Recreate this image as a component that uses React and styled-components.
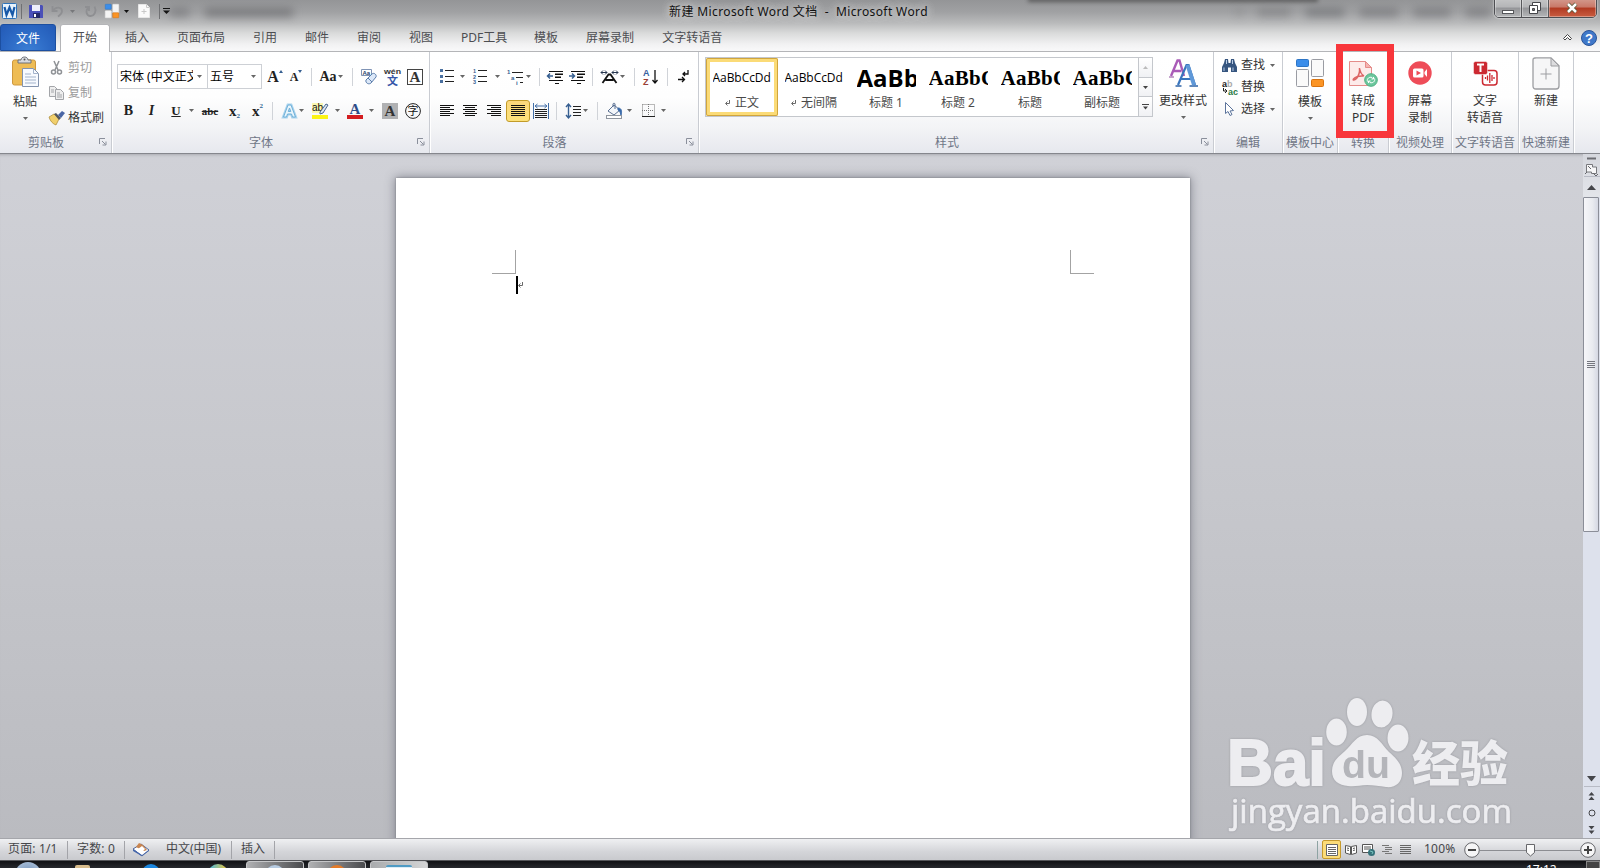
import React from 'react';
import styled, { createGlobalStyle, css } from 'styled-components';

const Global = createGlobalStyle`
  * { box-sizing: border-box; }
  html, body { margin: 0; padding: 0; overflow: hidden; }
  body { font: 12px/16px "Noto Sans", "Noto Sans CJK SC", sans-serif; color: #333; }
  svg { display: block; flex: none; overflow: visible; }
`;

/* ---------- frame ---------- */
const Window = styled.div`
  width: 1600px; height: 868px; display: flex; flex-direction: column; overflow: hidden;
`;
const Header = styled.header`
  height: 52px; flex: none; position: relative; border-bottom: 1px solid #b4b5b8;
  background: linear-gradient(#949597 0, #a0a1a3 12px, #b9babb 23px, #d9dada 33px, #f1f1f2 44px, #f9f9fa 51px);
`;
const TitleBar = styled.div`height: 24px; display: flex; align-items: flex-start; position: relative;`;
const QuickAccess = styled.div`display: flex; align-items: center; height: 22px; width: 300px;`;
const Title = styled.h1`
  margin: 0 0 0 369px; width: 270px; font-size: 12px; font-weight: 400; line-height: 23px; color: #111; white-space: pre;
  letter-spacing: ${p => p.$track}px; text-shadow: 0 0 8px #ddd, 0 0 8px #ddd;
`;
const Ghost = styled.div`
  position: absolute; left: ${p => p.$x}px; top: 8px; display: flex; gap: ${p => p.$gap}px; filter: blur(4px);
`;
const GhostWord = styled.span`width: ${p => p.$w}px; height: 9px; background: #55565a; opacity: ${p => p.$o || 0.5};`;
const GlassShade = styled.div`
  position: absolute; left: 1028px; top: -3px; width: 290px; height: 5px; background: #444; opacity: .7; filter: blur(2px);
`;
const Controls = styled.div`
  position: absolute; left: 1494px; top: -2px; display: flex; height: 20px; width: 103px;
  border: 1px solid #4d4e52; border-radius: 0 0 5px 5px; overflow: hidden; box-shadow: 0 0 2px #fff;
`;
const Control = styled.div`
  width: ${p => p.$w}px; display: flex; align-items: center; justify-content: center; border-right: ${p => (p.$close ? 0 : 1)}px solid #57585b;
  background: ${p => p.$close ? 'linear-gradient(#d39a8d, #c97868 45%, #b13a22 50%, #c95d41 100%)' : 'linear-gradient(#c4c5c6, #b4b5b7 45%, #939497 50%, #b5b6b8)'};
  box-shadow: inset 0 0 0 1px rgba(255,255,255,.35);
`;
const TabBar = styled.nav`height: 28px; display: flex; align-items: stretch;`;
const FileTab = styled.div`
  width: 56px; height: 27px; margin-right: 4px; border-radius: 3px 3px 0 0; border: 1px solid #1c4fa0; color: #fff;
  background: radial-gradient(ellipse at 50% 110%, #3c80d6 0, #2a66c2 65%, #235ab6 100%);
  text-align: center; line-height: 27px;
`;
const Tab = styled.div`
  padding: 0 14px; line-height: 28px; color: #4c4d51; white-space: nowrap; height: 28px;
  ${p => p.$w && css`width: ${p.$w}px;`}
  ${p => p.$active && css`
    background: #fff; border: 1px solid #b4b5b8; border-bottom: 0; border-radius: 3px 3px 0 0; padding: 0 12px; margin-right: 1px; line-height: 26px; position: relative; z-index: 1;
  `}
`;
const HeaderTools = styled.div`margin-left: auto; display: flex; align-items: center; gap: 9px; padding-right: 3px; height: 27px;`;

/* ---------- ribbon ---------- */
const Ribbon = styled.div`
  height: 102px; flex: none; display: flex; border-bottom: 1px solid #85878d;
  background: linear-gradient(#fff 0, #fefefe 45px, #f3f4f6 75px, #e6e8ee 101px);
`;
const Group = styled.section`
  width: ${p => p.$w}px; flex: none; position: relative; display: flex; flex-direction: column;
  border-right: 1px solid #c9ccd2; box-shadow: 1px 0 0 #fff;
`;
const Body = styled.div`height: 82px; display: flex; flex-direction: ${p => p.$col ? 'column' : 'row'};`;
const Caption = styled.div`
  height: 18px; line-height: 18px; text-align: center; color: #6f7686; white-space: nowrap; padding-right: ${p => p.$pad || 0}px;
`;
const Launcher = styled.div`position: absolute; right: 4px; bottom: 7px;`;
const Row = styled.div`display: flex; align-items: center; height: 25px; padding-left: ${p => p.$l || 0}px; margin-top: ${p => p.$t || 0}px;`;
const Slot = styled.div`
  width: ${p => p.$w}px; margin-left: ${p => p.$g || 0}px; flex: none; display: flex; align-items: center; justify-content: center;
`;
const Sep = styled.div`width: 1px; height: ${p => p.$h || 18}px; margin-left: ${p => p.$g}px; background: ${p => p.$c || '#d0d3d8'}; flex: none;`;
const Glyph = styled.span`
  font: ${p => p.$italic ? 'italic ' : ''}bold ${p => p.$s}px/20px "Liberation Serif", serif; color: ${p => p.$c || '#222'};
  text-decoration: ${p => p.$d || 'none'};
`;
const Script = styled.span`
  font: bold 7px/8px "Liberation Serif", serif; color: #2e6692; margin-${p => (p.$up ? 'bottom' : 'top')}: 10px;
`;
const Combo = styled.div`
  width: ${p => p.$w}px; height: 25px; border: 1px solid #cdd0d5; margin-left: ${p => p.$m || 0}px; background: #fff; color: #000;
  display: flex; align-items: center; justify-content: space-between; padding: 0 5px 0 2px; white-space: nowrap;
`;
const ComboText = styled.span`width: ${p => p.$w}px; overflow: hidden; line-height: 22px;`;
const Lit = styled.div`
  width: 24px; height: 22px; margin-left: 5px; display: flex; align-items: center; justify-content: center; flex: none;
  border: 1px solid #c29b29; border-radius: 3px; background: linear-gradient(#fbd77c, #fce27a);
`;
const Side = styled.div`display: flex; flex-direction: column; padding-top: 4px;`;
const SideRow = styled.div`
  display: flex; align-items: center; height: ${p => p.$h}px; white-space: nowrap; color: ${p => p.$off ? '#9b9b9b' : '#333'};
`;
const Big = styled.div`
  width: ${p => p.$w}px; margin-left: ${p => p.$l || 0}px; display: flex; flex-direction: column; align-items: center; white-space: nowrap;
`;
const BigIcon = styled.div`height: ${p => p.$h || 40}px; padding-top: ${p => p.$t}px;`;
const BigText = styled.div`line-height: 17px;`;
const Gallery = styled.div`
  width: 448px; height: 60px; margin: 5px 0 0 6px; border: 1px solid #c4c7cc; display: flex; background: #fff; flex: none;
`;
const StyleItem = styled.div`
  width: 72px; height: 58px; display: flex; flex-direction: column; align-items: center; flex: none;
  ${p => p.$on && css`box-shadow: inset 0 0 0 1px #d0a53c, inset 0 0 0 4px #fbdb77; border-radius: 2px; background: #fff;`}
`;
const Sample = styled.div`
  width: 59px; height: 35px; overflow: hidden; white-space: nowrap; color: #000; line-height: 40px;
  font-family: ${p => p.$serif ? '"Liberation Serif", serif' : '"Open Sans", sans-serif'};
  font-size: ${p => p.$s}px; font-weight: ${p => p.$b ? 700 : 400}; letter-spacing: ${p => p.$k || 0}px;
`;
const StyleName = styled.div`display: flex; align-items: center; gap: 5px; line-height: 20px; color: #4a4a4a; white-space: nowrap;`;
const Scroller = styled.div`width: 14px; margin-left: auto; display: flex; flex-direction: column; border-left: 1px solid #c4c7cc;`;
const ScrollBtn = styled.div`
  flex: 1; display: flex; align-items: center; justify-content: center; background: linear-gradient(#fff, #f0f1f4);
  & + & { border-top: 1px solid #c4c7cc; }
`;
const RedFrame = styled.div`position: absolute; left: -2px; top: -8px; width: 58px; height: 94px; border: 7px solid #f8363b; z-index: 3;`;

/* ---------- workspace ---------- */
const Workspace = styled.main`
  height: 684px; flex: none; display: flex; position: relative; background: linear-gradient(#d0d1d7, #c6c7cc 50%, #babbc0);
  box-shadow: inset 0 3px 3px -2px #aaabb1;
`;
const Canvas = styled.div`flex: 1; padding: 24px 0 0 396px; overflow: hidden;`;
const Page = styled.article`
  width: 794px; height: 670px; background: #fff; box-shadow: 0 0 2px #77797f, 0 0 10px 1px #8b8d96; padding: 72px 96px 0;
`;
const Corners = styled.div`display: flex; justify-content: space-between;`;
const Corner = styled.div`width: 24px; height: 24px; border-bottom: 1px solid #a3a3a3; border-${p => p.$side}: 1px solid #a3a3a3;`;
const Line = styled.p`margin: 2px 0 0 24px; display: flex; align-items: center; height: 18px;`;
const Caret = styled.span`width: 2px; height: 18px; background: #000;`;
const ScrollColumn = styled.aside`width: 17px; display: flex; flex-direction: column; background: #dde1ec;`;
const ScrollTop = styled.div`
  width: 17px; height: 43px; background: linear-gradient(#d5d7dd, #e3e5ea); display: flex; flex-direction: column; align-items: center;
`;
const Thumb = styled.div`
  width: 16px; height: 335px; border: 1px solid #8b8e98; border-radius: 1px; background: linear-gradient(90deg, #f6f6f9, #e9ebf0 60%, #d5d8e3);
  display: flex; align-items: center; justify-content: center;
`;
const Spacer = styled.div`flex: 1;`;
const ScrollBottom = styled.div`
  width: 17px; height: 62px; display: flex; flex-direction: column; align-items: center; gap: ${p => p.$gap}px;
`;
const StepStack = styled.div`display: flex; flex-direction: column; align-items: center; gap: 9px;`;
const Rule = styled.div`width: 16px; height: 1px; background: #b8bbc5;`;
const Watermark = styled.div`position: absolute; left: 1220px; top: 536px;`;

/* ---------- bottom ---------- */
const StatusBar = styled.footer`
  height: 22px; flex: none; display: flex; align-items: center; color: #45464a; white-space: nowrap;
  border-top: 1px solid #a5a6ab; background: linear-gradient(#eff0f2, #d4d5d9 60%, #c9cace);
`;
const StatusText = styled.span`width: ${p => p.$w}px; margin-left: ${p => p.$g}px; letter-spacing: ${p => p.$k || 0}px; line-height: 19px; height: 21px;`;
const ViewOn = styled.div`
  width: 19px; height: 19px; margin-left: 4px; border: 1px solid #c69a2d; border-radius: 2px; background: #fbdc79; display: flex; align-items: center; justify-content: center;
`;
const TaskBar = styled.div`
  height: 8px; flex: none; display: flex; align-items: flex-start; overflow: hidden; border-top: 1px solid #55565a; background: linear-gradient(#101114, #26282d);
`;
const TaskButton = styled.div`
  width: 58px; height: 14px; margin-left: ${p => p.$g}px; border: 1px solid #c6c7c9; border-radius: 3px; display: flex; justify-content: center; padding-top: 2px; flex: none;
  background: ${p => p.$on ? 'linear-gradient(90deg,#a9abad,#d4d5d6)' : 'linear-gradient(90deg,#b0b1b3,#4a4b4e)'};
`;
const Orb = styled.div`
  width: ${p => p.$w}px; height: ${p => p.$w}px; margin: ${p => p.$t || 1}px 0 0 ${p => p.$g || 0}px; flex: none; border-radius: ${p => p.$r || '50%'}; background: ${p => p.$c};
`;
const Clock = styled.span`margin: 2px 0 0 auto; width: 60px; color: #fff; line-height: 14px; flex: none;`;
const PeekButton = styled.div`width: 14px; height: 20px; border: 1px solid #888; background: #444;`;

/* ---------- drawings ---------- */
const Arrow = ({ c = '#666', w = 5 }) => (
  <svg width={w} height={w * 0.6} viewBox="0 0 10 6"><path d="M0 0h10L5 6z" fill={c} /></svg>
);
const Drop = ({ g, c }) => <Slot $w={5} $g={g}><Arrow c={c} /></Slot>;
const LaunchIcon = () => (
  <Launcher><svg width="8" height="8" viewBox="0 0 8 8" fill="none" stroke="#8a8f9b"><path d="M.5 6V.5H6M3 3l3.500 3.500M7 3.500V7H3.500" /></svg></Launcher>
);
const Lines = ({ rows, w = 14, c = '#111' }) => (
  <svg width={w} height={rows.length * 2} viewBox={`0 0 ${w} ${rows.length * 2}`} shapeRendering="crispEdges">
    {rows.map(([x, l], i) => <rect key={i} x={x} y={i * 2} width={l} height="1" fill={c} />)}
  </svg>
);
const WordLogo = () => (
  <svg width="15" height="16" viewBox="0 0 15 16"><rect x=".5" y=".5" width="14" height="15" rx="1" fill="#e8f3fc" stroke="#2f74b9" /><path d="M2.500 4l2 8 3-7.500 3 7.500 2-8" fill="none" stroke="#1759a8" strokeWidth="2.200" /></svg>
);
const Floppy = () => (
  <svg width="14" height="14" viewBox="0 0 14 14"><path d="M0 1h13l1 1v12H0z" fill="#4a50b8" /><path d="M3 1h8v6H3z" fill="#eef0fb" /><path d="M4 9h7v5H4z" fill="#252a6b" /><path d="M5 10h2v3H5z" fill="#fff" /></svg>
);
const Undo = () => (
  <svg width="13" height="13" viewBox="0 0 13 13" fill="none" stroke="#8e8f92" strokeWidth="1.800"><path d="M1.500 1v5h5M2 5.500C5 1 11 2 11 6c0 3-2 4-4 5.500" /></svg>
);
const Redo = () => (
  <svg width="12" height="12" viewBox="0 0 12 12" fill="none" stroke="#8e8f92" strokeWidth="1.800"><path d="M0 2h4v4M3.500 2.500C0 6 1.500 11 5.500 11S12 6 9.500 1.500" /></svg>
);
const Tiles = ({ s = 28, flat }) => (
  <svg width={s} height={s} viewBox="0 0 28 28" fill={flat ? '#f4f4f4' : '#fafafa'} stroke={flat ? '#e8e8e8' : '#9a9ca3'}>
    <rect x=".5" y=".5" width="12" height={flat ? 10 : 7} rx="1" fill="#3c8eea" stroke="#2d75c5" /><rect x="15.500" y=".5" width="12" height="17" rx="1" />
    <rect x=".5" y={flat ? 13.5 : 10.5} width="12" height={flat ? 14 : 17} rx="1" /><rect x="15.500" y={flat ? 17.5 : 20.5} width="12" height={flat ? 10 : 7} rx="1" fill="#fb9425" stroke="#d8720d" />
  </svg>
);
const MiniPage = () => (
  <svg width="12" height="14" viewBox="0 0 12 14"><path d="M.5.5h8l3 3v10H.5z" fill="#fafafa" stroke="#e6e6e6" /><path d="M6 5v5M3.500 7.500h5M8.500.5v3h3" stroke="#c8c8c8" fill="none" /></svg>
);
const Clipboard = () => (
  <svg width="27" height="31" viewBox="0 0 27 31">
    <rect x=".5" y="3" width="23" height="25" rx="2" fill="#eebc55" stroke="#cf983d" />
    <path d="M6 6V3h3c0-4 7-4 7 0h3v3z" fill="#d7dadf" stroke="#6d7078" /><circle cx="12.500" cy="2.500" r="1" fill="#555" />
    <path d="M10.500 11.500h11l5 5v13h-16z" fill="#f7faff" stroke="#8393ae" /><path d="M21.500 11.500v5h5M13 17h6M13 20h11M13 23h11M13 26h11" stroke="#a3b3cb" fill="none" />
  </svg>
);
const Scissors = () => (
  <svg width="11" height="14" viewBox="0 0 11 14" fill="none" stroke="#8f9296" strokeWidth="1.500"><path d="M3 0l4 9M8 0L4 9" /><circle cx="2.500" cy="11" r="2" /><circle cx="8.500" cy="11" r="2" /></svg>
);
const Copy = () => (
  <svg width="15" height="14" viewBox="0 0 15 14" fill="#eee" stroke="#a3a5a9"><path d="M.5.5h5l3 3v7h-8z" /><path d="M6.500 3.500h5l3 3v7h-8zM8 7h3M8 9h5M8 11h5M2 4h3M2 6h3" /></svg>
);
const Brush = () => (
  <svg width="16" height="14" viewBox="0 0 16 14"><path d="M0 6l5-3 5 5-3 6c-3-1-6-4-7-8z" fill="#f1cf6b" stroke="#a88735" strokeWidth=".7" /><path d="M5 3l2-1 5 5-2 2z" fill="#55585d" /><path d="M9 4l4-4 3 2-4 5z" fill="#4965a5" /></svg>
);
const Eraser = () => (
  <svg width="16" height="16" viewBox="0 0 16 16"><path d="M.5.5h10v6H.5z" fill="#fff" stroke="#7f93b5" /><text x="1.500" y="6" fontSize="6" fontWeight="bold" fontFamily="Liberation Sans" fill="#2b4370">Aa</text><path d="M5 11l6-6c2-2 5 1 4 3l-5 6c-2 2-6 0-5-3z" fill="#dce8f8" stroke="#5b7dab" /><path d="M7 9l4 4" fill="none" stroke="#5b7dab" /></svg>
);
const Wen = () => (
  <svg width="17" height="18" viewBox="0 0 17 18"><text x="0" y="6" fontSize="7" fontWeight="bold" textLength="17" lengthAdjust="spacingAndGlyphs" fontFamily="Liberation Sans" fill="#333">wén</text><text x="3" y="16.500" fontSize="11" fontWeight="bold" fontFamily="Noto Sans CJK SC" fill="#3656a8">文</text></svg>
);
const BoxedA = ({ fill }) => (
  <svg width="16" height="16" viewBox="0 0 16 16"><rect x=".5" y=".5" width="15" height="15" fill={fill || '#fff'} stroke={fill || '#444'} /><text x="8" y="13" textAnchor="middle" fontSize="15" fontWeight="bold" fontFamily="Liberation Serif" fill="#333">A</text></svg>
);
const CircledZi = () => (
  <svg width="16" height="16" viewBox="0 0 16 16"><circle cx="8" cy="8" r="7.400" fill="none" stroke="#222" /><text x="8" y="12" textAnchor="middle" fontSize="11" fontFamily="Noto Sans CJK SC" fill="#111">字</text></svg>
);
const GlowA = () => (
  <svg width="15" height="16" viewBox="0 0 15 16" fill="none"><path d="M1.500 14L6 2h3l4.500 12h-3L9.500 11h-4l-1 3zM6.300 8.500h2.500L7.500 5z" stroke="#a9d3ee" strokeWidth="3" /><path d="M1.500 14L6 2h3l4.500 12h-3L9.500 11h-4l-1 3zM6.300 8.500h2.500L7.500 5z" fill="#e9f5fc" stroke="#6fb0d8" /></svg>
);
const Highlight = () => (
  <svg width="17" height="16" viewBox="0 0 17 16"><rect width="11" height="10" fill="#faf7b0" /><text x="0" y="8" fontSize="10" fontFamily="Liberation Sans" fill="#111">ab</text><path d="M8 9l6-8 2 1-5 8-3 1z" fill="#dbe5f1" stroke="#4a678e" /><rect x="0" y="12" width="16" height="4" fill="#fbf315" /></svg>
);
const ColorA = () => (
  <svg width="16" height="16" viewBox="0 0 16 16"><text x="8" y="11" textAnchor="middle" fontSize="15" fontWeight="bold" fontFamily="Liberation Serif" fill="#2f4d88">A</text><rect y="12" width="16" height="4" fill="#d31c20" /></svg>
);
const List = ({ marks }) => (
  <svg width="15" height="15" viewBox="0 0 15 15" shapeRendering="crispEdges">
    {[1, 7, 12].map((y, i) => (
      <g key={y}>{marks ? <text x="0" y={y + 3} fontSize="5.500" fontWeight="bold" fontFamily="Liberation Sans" fill="#365f91">{marks[i]}</text> : <rect x="0" y={y - 1} width="3" height="3" fill="#4a70a0" />}
        <rect x="5" y={y} width="9" height="1" fill="#222" /></g>
    ))}
  </svg>
);
const MultiList = () => (
  <svg width="17" height="16" viewBox="0 0 17 16" fontSize="6" fontWeight="bold" fontFamily="Liberation Sans" fill="#365f91"><text y="5">1</text><text x="4" y="11">a</text><text x="9" y="16">i</text><path d="M5 3.500h11M9 8.500h7M13 13.500h3" stroke="#222" /></svg>
);
const Indent = ({ right }) => (
  <svg width="16" height="14" viewBox="0 0 16 14" stroke="#111" fill="none"><path d="M2 1.500h14M8 4.500h8M8 7.500h6M2 10.500h14M8 13.500h4" /><path d="M8 4h8M8 7h6" /><path d={right ? 'M0 6h5M3 3.500L5.500 6 3 8.500' : 'M1 6h5M3 3.500L.5 6 3 8.500'} stroke="#365f91" strokeWidth="1.500" /></svg>
);
const CharScale = () => (
  <svg width="17" height="14" viewBox="0 0 17 14" stroke="#111" fill="none" strokeWidth="1.800"><path d="M1.500 13l6-8.500h2l6 8.500M4.500 10h8" /><path d="M0 2.500h6M11 2.500h6M2 .5L0 2.500l2 2M4 .5l2 2-2 2M13 .5l-2 2 2 2M15 .5l2 2-2 2" strokeWidth="1" stroke="#27364f" /></svg>
);
const Sort = () => (
  <svg width="15" height="16" viewBox="0 0 15 16"><text x="0" y="7" fontSize="9" fontWeight="bold" fontFamily="Liberation Sans" fill="#365f9f">A</text><text x="0" y="15.500" fontSize="9" fontWeight="bold" fontFamily="Liberation Sans" fill="#9a3f36">Z</text><path d="M12 1v13M9.500 11l2.500 3 2.500-3" stroke="#111" fill="none" strokeWidth="1.300" /></svg>
);
const Marks = () => (
  <svg width="11" height="13" viewBox="0 0 11 13" stroke="#111" fill="none" strokeWidth="1.300"><path d="M10 0v4H5M7 2L5 4l2 2M0 9.500h6M4 7l2.500 2.500L4 12" /></svg>
);
const Distribute = () => (
  <svg width="16" height="16" viewBox="0 0 16 16" fill="none"><path d="M.5 0v16M15.500 0v16M2 3h12M4.500 1L2 3l2.500 2M11.500 1L14 3l-2.500 2" stroke="#426fa8" /><path d="M2 6.500h12M2 8.500h12M2 10.500h12M2 12.500h12M2 14.500h12" stroke="#222" /></svg>
);
const Spacing = () => (
  <svg width="15" height="16" viewBox="0 0 15 16" fill="none"><path d="M2.500 1v14M0 4l2.500-3L5 4M0 12l2.500 3L5 12" stroke="#365f91" strokeWidth="1.400" /><path d="M7 3.500h8M7 6.500h8M7 9.500h8M7 12.500h8" stroke="#222" /></svg>
);
const Bucket = () => (
  <svg width="16" height="16" viewBox="0 0 16 16"><path d="M2 8l6-6 6 5-6 5z" fill="#f3f6fa" stroke="#596f91" /><path d="M7 4V1c0-1 2-1 2 0v5" fill="none" stroke="#596f91" /><path d="M12 5c4 0 4 4 3 7-1-3-1-4-3-5z" fill="#3768a9" stroke="#3768a9" /><rect x=".5" y="12.500" width="15" height="3" fill="#fff" stroke="#8f969f" /></svg>
);
const Borders = () => (
  <svg width="13" height="13" viewBox="0 0 13 13" fill="none" stroke="#777"><path d="M.5.5h12v12M.5.5v12M6.500 0v12M0 6.500h12" strokeDasharray="1 1" /><path d="M0 12.500h13" stroke="#222" /></svg>
);
const ChangeStyles = () => (
  <svg width="29" height="28" viewBox="0 0 29 28"><path d="M2 17L8.500 1.500h2L15 17M5 12h7" fill="none" stroke="#a95bb7" strokeWidth="2.400" /><path d="M0 18h5" stroke="#8d4b9c" /><path d="M9 26L17.500 6h2L26 26M12.500 20h10" fill="none" stroke="#3975bd" strokeWidth="2.200" /><path d="M6.500 27h6M20.500 27H29" stroke="#2c62a5" strokeWidth="1.500" /><path d="M18.500 6L25 26" stroke="#5f98d8" strokeWidth="4" /></svg>
);
const Binoculars = () => (
  <svg width="15" height="13" viewBox="0 0 15 13"><path d="M3 0h3l.5 4h2L9 0h3l1 4 2 4v5H9V8.500H6V13H0V8l2-4z" fill="#36557f" /><path d="M2 8.500v3.500M11 8.500v3.500M4.500 1v4M10.500 1v4" stroke="#b7cbe4" /></svg>
);
const Replace = () => (
  <svg width="16" height="15" viewBox="0 0 16 15" fontFamily="Liberation Sans" fontSize="9" fontWeight="bold"><text y="6.500" fill="#222">a</text><text x="5" y="6.500" fill="#aaa">b</text><text x="6" y="14.500" fill="#2b7a45">ac</text><path d="M1.500 8v3h3M3 9l2 2-2 2" fill="none" stroke="#222" /></svg>
);
const Pointer = () => (
  <svg width="9" height="14" viewBox="0 0 9 14"><path d="M.5.5v11l2.500-2 2 4 2-1-2-3.500 3.500-.5z" fill="#fff" stroke="#5b739b" /></svg>
);
const PdfIcon = () => (
  <svg width="29" height="27" viewBox="0 0 29 27"><path d="M.5 1.500h16l6 6v18H.5z" fill="#fdebea" stroke="#e58c8a" /><path d="M16.500 1.500v6h6z" fill="#f5b3b0" stroke="#e58c8a" /><path d="M10.500 8c.5 5-1 8-3 10.500-2 2-4 2-3 .5 1.500-2 6-3.500 10-3M10.500 8c.5 4 2 6.500 4.500 8" fill="none" stroke="#dc6464" strokeWidth="1.500" /><circle cx="22" cy="20" r="6.300" fill="#6cc79d" stroke="#4fb083" /><path d="M18.500 21.500c-1-3 2-5 4.500-4l1.500 1.500M25.500 18.500c1 3-2 5-4.500 4L19.500 21M24.500 17v2h-2M19.500 23v-2h2" stroke="#fff" fill="none" /></svg>
);
const Recorder = () => (
  <svg width="24" height="24" viewBox="0 0 24 24"><circle cx="12" cy="12" r="11.700" fill="#ee4c58" /><rect x="5" y="7.500" width="10.500" height="9" rx="1.500" fill="#fff" /><path d="M16.500 11l2.500-3v8l-2.500-3z" fill="#fff" /><path d="M8.500 9.500l4.500 2.500-4.500 2.500z" fill="#ee4c58" /></svg>
);
const Speech = () => (
  <svg width="25" height="25" viewBox="0 0 25 25"><rect x="9.500" y="9.500" width="14.500" height="14.500" rx="3" fill="#fff" stroke="#cc2931" strokeWidth="1.500" /><rect x=".5" y=".5" width="14" height="13" rx="2" fill="#cc2931" stroke="#fff" strokeWidth=".5" /><path d="M4 3.500h7M7.500 3.500V11" stroke="#fff" strokeWidth="2" /><path d="M12.500 16v2M14.500 14.500v5M16.800 12v10M19 14v6M21 16v2" stroke="#cc2931" strokeWidth="1.300" /></svg>
);
const NewDoc = () => (
  <svg width="28" height="33" viewBox="0 0 28 33" fill="none" stroke="#9c9da1"><path d="M3 .8h16l8 8V29q0 3-3 3H4q-3 0-3-3V3q0-2 2-2z" fill="#f6f6f7" strokeWidth="1.300" /><path d="M19 1v8h8z" fill="#dcdcde" /><path d="M8.500 17h11M14 11.500v11" /></svg>
);
const ReturnMark = () => (
  <svg width="5" height="6" viewBox="0 0 5 6" fill="none" stroke="#6a6a6a"><path d="M4.500 0v3.500H1M2.500 1.500L.5 3.500l2 2" /></svg>
);
const StatusBook = () => (
  <svg width="16" height="13" viewBox="0 0 16 13"><path d="M0 6l8-5 8 6-7 6z" fill="#fff" stroke="#4b649b" /><path d="M3 4l3-4 4 2 4 5-3 1z" fill="#c9854f" /><path d="M5 6l4-3 3 3-3 3z" fill="#fff" /><path d="M0 6v2l8.500 5L16 8V7l-7 5z" fill="#4667ab" /></svg>
);
const BookView = () => (
  <svg width="12" height="11" viewBox="0 0 12 11" fill="#fff" stroke="#555"><path d="M.5 1.500l5 1v8l-5-1.500zM11.500 1.500l-5 1v8l5-1.500zM2 4l2 .5M2 6l2 .5M8 4.500l2-.5M8 6.500l2-.5" /></svg>
);
const WebView = () => (
  <svg width="13" height="12" viewBox="0 0 13 12"><path d="M.5.5h10v8H.5zM2 3h7M2 5h7" fill="#fff" stroke="#555" /><circle cx="9.500" cy="8.500" r="3.500" fill="#35727a" /><path d="M8 7l3 1-1 2" stroke="#79c5c0" fill="none" /></svg>
);
const ZoomRound = ({ plus }) => (
  <svg width="16" height="16" viewBox="0 0 16 16" fill="none" stroke="#66676b"><circle cx="8" cy="8" r="7.300" fill="#f5f5f6" /><path d={plus ? 'M4 8h8M8 4v8' : 'M4 8h8'} strokeWidth="2" stroke="#444" /></svg>
);
const Slider = () => (
  <svg width="100" height="14" viewBox="0 0 100 14"><path d="M0 7.500h100" stroke="#8c8d92" /><path d="M46.500 1.500h8v8l-4 3.500-4-3.500z" fill="#fafafa" stroke="#66676b" /></svg>
);
const SplitIcon = () => (
  <svg width="13" height="22" viewBox="0 0 13 22"><path d="M2 4.500h9" stroke="#6c6d72" strokeWidth="2" /><g transform="translate(0 10)"><path d="M1.500.5h6v2.500h4v6.500h-5V8h-5z" fill="#f7f7f8" stroke="#77787c" /><path d="M0 10l2-2M8 9l3 3 2-2M3 2l3 3" fill="none" stroke="#66676b" /></g></svg>
);
const DoubleArrow = ({ down }) => (
  <svg width="7" height="8" viewBox="0 0 7 8" fill="#45464a"><path d="M.5 3.500L3.500 0l3 3.500zM.5 8l3-3.500 3 3.500z" transform={down ? 'rotate(180 3.500 4)' : undefined} /></svg>
);
const BaiduMark = () => (
  <svg width="300" height="150" viewBox="1220 690 300 150" style={{ filter: 'drop-shadow(0 0 1px #9b9ca2)' }}>
    <g fill="#ededf0">
      <text x="1227" y="785" fontFamily="Liberation Sans" fontWeight="bold" fontSize="64" textLength="99" lengthAdjust="spacingAndGlyphs" stroke="#ededf0" strokeWidth="2">Bai</text>
      <ellipse cx="1336.500" cy="732" rx="10.300" ry="13.500" /><ellipse cx="1357" cy="712" rx="10" ry="14" />
      <ellipse cx="1382" cy="714" rx="10.500" ry="13.500" transform="rotate(8 1382 714)" /><ellipse cx="1398" cy="738" rx="10.500" ry="13.500" />
      <path d="M1367 735c11 0 15 10 22 17 7 6 13 12 13 21 0 10-7 15-16 14-7-1-12-2-19-2s-12 2-19 1c-9-1-16-5-16-15 0-9 6-14 13-20 8-7 11-16 22-16z" />
      <text x="1412" y="781" fontFamily="Noto Sans CJK SC" fontWeight="900" fontSize="48" textLength="96" lengthAdjust="spacingAndGlyphs">经验</text>
      <text x="1231" y="823" fontFamily="Open Sans" fontSize="32" textLength="281" lengthAdjust="spacingAndGlyphs" stroke="#ededf0" strokeWidth=".7">jingyan.baidu.com</text>
    </g>
    <text x="1342" y="778" fontFamily="Liberation Sans" fontWeight="bold" fontSize="39" textLength="48" lengthAdjust="spacingAndGlyphs" fill="#b4b5ba">du</text>
  </svg>
);

const FULL = [[0, 14], [0, 14], [0, 14], [0, 14], [0, 14], [0, 14]];
const LEFT = [[0, 14], [0, 10], [0, 14], [0, 10], [0, 14], [0, 10]];
const MID = [[0, 14], [2, 10], [0, 14], [2, 10], [0, 14], [2, 10]];
const RIGHT = [[0, 14], [4, 10], [0, 14], [4, 10], [0, 14], [4, 10]];

const TABS = ['插入', '页面布局', '引用', '邮件', '审阅', '视图', 'PDF工具', '模板', '屏幕录制', '文字转语音'];

const STYLES = [
  { name: '正文', text: 'AaBbCcDd', size: 12, mark: true, on: true, track: -0.05 },
  { name: '无间隔', text: 'AaBbCcDd', size: 12, mark: true, track: -0.05 },
  { name: '标题 1', text: 'AaBb', size: 24, bold: true },
  { name: '标题 2', text: 'AaBbC', size: 21, bold: true, serif: true, track: 0.3 },
  { name: '标题', text: 'AaBbC', size: 21, bold: true, serif: true, track: 0.3 },
  { name: '副标题', text: 'AaBbC', size: 21, bold: true, serif: true, track: 0.3 },
];

const LargeButton = ({ w, l, icon, top, head, lines, arrow }) => (
  <Big $w={w} $l={l}>
    <BigIcon $t={top} $h={head}>{icon}</BigIcon>
    {lines.map(t => <BigText key={t}>{t}</BigText>)}
    {arrow && <Slot $w={6}><svg width="5" height="12" viewBox="0 0 5 12"><path d="M0 7h5L2.500 10z" fill="#666" /></svg></Slot>}
  </Big>
);

const HeaderArea = () => (
  <Header>
    <TitleBar>
      <GlassShade />
      <Ghost $x={170} $gap={16}><GhostWord $w={19} $o={0.4} /><GhostWord $w={88} $o={0.5} /></Ghost>
      <Ghost $x={1236} $gap={16}><GhostWord $w={6} $o={0.2} /><GhostWord $w={32} $o={0.3} /><GhostWord $w={38} $o={0.45} /><GhostWord $w={38} $o={0.4} /><GhostWord $w={36} $o={0.4} /><GhostWord $w={24} $o={0.4} /></Ghost>
      <QuickAccess>
        <Slot $w={15} $g={2}><WordLogo /></Slot><Sep $g={4} $h={15} $c="#6f7073" />
        <Slot $w={14} $g={7}><Floppy /></Slot>
        <Slot $w={13} $g={8}><Undo /></Slot><Drop g={6} c="#77787b" />
        <Slot $w={12} $g={10}><Redo /></Slot>
        <Slot $w={14} $g={8}><Tiles s={14} flat /></Slot><Drop g={5} c="#111" />
        <Slot $w={12} $g={9}><MiniPage /></Slot><Sep $g={9} $h={15} $c="#6f7073" />
        <Slot $w={7} $g={3}><svg width="7" height="6" viewBox="0 0 7 6"><path d="M0 .5h7" stroke="#111" /><path d="M0 2.500h7L3.500 6z" fill="#111" /></svg></Slot>
      </QuickAccess>
      <Title $track={0.39}>新建 Microsoft Word 文档  -  Microsoft Word</Title>
      <Controls>
        <Control $w={28}><svg width="12" height="16"><rect x=".5" y="10.500" width="11" height="3" fill="#fff" stroke="#55565a" /></svg></Control>
        <Control $w={27}><svg width="12" height="12" viewBox="0 0 12 12" fill="#fff" stroke="#45464a"><path d="M3.500.5h8v8h-8z" /><path d="M.5 3.500h8v8h-8z" /><path d="M3.500 6.500h2v2h-2z" fill="#777" /></svg></Control>
        <Control $w={48} $close><svg width="12" height="12" viewBox="0 0 12 12"><path d="M2 2l8 8M10 2l-8 8" stroke="#553" strokeWidth="4" /><path d="M2 2l8 8M10 2l-8 8" stroke="#fff" strokeWidth="2.500" /></svg></Control>
      </Controls>
    </TitleBar>
    <TabBar>
      <FileTab>文件</FileTab>
      <Tab $active $w={50}>开始</Tab>
      {TABS.map(t => <Tab key={t} $w={t === 'PDF工具' ? 73 : undefined}>{t}</Tab>)}
      <HeaderTools>
        <svg width="9" height="7" viewBox="0 0 9 7" fill="#fff" stroke="#444"><path d="M.5 4.500l4-4 4 4-1.500 1.500-2.500-2.500L2 6z" /></svg>
        <svg width="16" height="16" viewBox="0 0 16 16"><circle cx="8" cy="8" r="7.500" fill="#3f78c9" stroke="#2a5498" /><text x="8" y="13" textAnchor="middle" fontSize="13" fontWeight="bold" fontFamily="Liberation Sans" fill="#fff">?</text></svg>
      </HeaderTools>
    </TabBar>
  </Header>
);

const RibbonArea = () => (
  <Ribbon>
    <Group $w={112}>
      <Body>
        <Big $w={26} $l={12}>
          <BigIcon $t={5} $h={41}><Clipboard /></BigIcon>
          <BigText>粘贴</BigText>
          <Slot $w={6}><svg width="5" height="15" viewBox="0 0 5 15"><path d="M0 7h5L2.500 10z" fill="#666" /></svg></Slot>
        </Big>
        <Side>
          <SideRow $h={24} $off><Slot $w={11} $g={13}><Scissors /></Slot><Slot $w={24} $g={6}>剪切</Slot></SideRow>
          <SideRow $h={25} $off><Slot $w={15} $g={11}><Copy /></Slot><Slot $w={24} $g={4}>复制</Slot></SideRow>
          <SideRow $h={25}><Slot $w={16} $g={11}><Brush /></Slot><Slot $w={36} $g={3}>格式刷</Slot></SideRow>
        </Side>
      </Body>
      <Caption $pad={19}>剪贴板</Caption><LaunchIcon />
    </Group>

    <Group $w={318}>
      <Body $col>
        <Row $t={12} $l={5}>
          <Combo $w={91}><ComboText $w={73}>宋体 (中文正文)</ComboText><Arrow /></Combo>
          <Combo $w={55} $m={-1}><ComboText $w={30}>五号</ComboText><Arrow /></Combo>
          <Slot $w={12} $g={5}><Glyph $s={16}>A</Glyph></Slot><Slot $w={4}><svg width="4" height="14"><path d="M0 3h4L2 0z" fill="#365f91" /></svg></Slot>
          <Slot $w={8} $g={7}><Glyph $s={12}>A</Glyph></Slot><Slot $w={4}><svg width="4" height="14"><path d="M0 0h4L2 3z" fill="#365f91" /></svg></Slot>
          <Sep $g={9} /><Slot $w={16} $g={8}><Glyph $s={14}>Aa</Glyph></Slot><Drop g={2} />
          <Sep $g={9} /><Slot $w={16} $g={8}><Eraser /></Slot><Slot $w={17} $g={7}><Wen /></Slot><Slot $w={16} $g={6}><BoxedA /></Slot>
        </Row>
        <Row $t={9} $l={12}>
          <Slot $w={9}><Glyph $s={14}>B</Glyph></Slot>
          <Slot $w={9} $g={14}><Glyph $s={14} $italic>I</Glyph></Slot>
          <Slot $w={10} $g={15}><Glyph $s={13} $d="underline">U</Glyph></Slot><Drop g={8} />
          <Slot $w={16} $g={8}><Glyph $s={11} $d="line-through">abc</Glyph></Slot>
          <Slot $w={13} $g={10}><Glyph $s={15}>x</Glyph><Script>2</Script></Slot>
          <Slot $w={13} $g={10}><Glyph $s={15}>x</Glyph><Script $up>2</Script></Slot>
          <Sep $g={8} /><Slot $w={15} $g={9}><GlowA /></Slot><Drop g={2} />
          <Slot $w={17} $g={8}><Highlight /></Slot><Drop g={6} />
          <Slot $w={16} $g={7}><ColorA /></Slot><Drop g={6} />
          <Slot $w={14} $g={9}><BoxedA fill="#b0b1b3" /></Slot><Slot $w={16} $g={8}><CircledZi /></Slot>
        </Row>
      </Body>
      <Caption $pad={19}>字体</Caption><LaunchIcon />
    </Group>

    <Group $w={269}>
      <Body $col>
        <Row $t={12} $l={10}>
          <Slot $w={15}><List /></Slot><Drop g={5} />
          <Slot $w={15} $g={8}><List marks={['1', '2', '3']} /></Slot><Drop g={7} />
          <Slot $w={17} $g={7}><MultiList /></Slot><Drop g={2} />
          <Sep $g={8} /><Slot $w={16} $g={7}><Indent /></Slot><Slot $w={16} $g={6}><Indent right /></Slot>
          <Sep $g={7} /><Slot $w={17} $g={8}><CharScale /></Slot><Drop g={2} />
          <Sep $g={9} /><Slot $w={15} $g={8}><Sort /></Slot><Sep $g={9} /><Slot $w={11} $g={10}><Marks /></Slot>
        </Row>
        <Row $t={9} $l={10}>
          <Slot $w={14}><Lines rows={LEFT} /></Slot><Slot $w={14} $g={9}><Lines rows={MID} /></Slot><Slot $w={14} $g={10}><Lines rows={RIGHT} /></Slot>
          <Lit><Lines rows={FULL} /></Lit>
          <Slot $w={16} $g={3}><Distribute /></Slot><Sep $g={7} />
          <Slot $w={15} $g={9}><Spacing /></Slot><Drop g={2} /><Sep $g={9} />
          <Slot $w={16} $g={8}><Bucket /></Slot><Drop g={5} />
          <Slot $w={13} $g={10}><Borders /></Slot><Drop g={6} />
        </Row>
      </Body>
      <Caption $pad={19}>段落</Caption><LaunchIcon />
    </Group>

    <Group $w={515}>
      <Body>
        <Gallery>
          {STYLES.map(s => (
            <StyleItem key={s.name} $on={s.on}>
              <Sample $s={s.size} $b={s.bold} $serif={s.serif} $k={s.track}>{s.text}</Sample>
              <StyleName>{s.mark && <ReturnMark />}{s.name}</StyleName>
            </StyleItem>
          ))}
          <Scroller>
            <ScrollBtn><svg width="5" height="3"><path d="M0 3h5L2.500 0z" fill="#bbb" /></svg></ScrollBtn>
            <ScrollBtn><Arrow c="#444" /></ScrollBtn>
            <ScrollBtn><svg width="7" height="6" viewBox="0 0 7 6"><path d="M0 .5h7" stroke="#444" /><path d="M1 2.500h5L3.500 5.500z" fill="#444" /></svg></ScrollBtn>
          </Scroller>
        </Gallery>
        <LargeButton w={48} l={6} top={7} icon={<ChangeStyles />} lines={['更改样式']} arrow />
      </Body>
      <Caption $pad={18}>样式</Caption><LaunchIcon />
    </Group>

    <Group $w={69}>
      <Body>
        <Side>
          <SideRow $h={18}><Slot $w={15} $g={8}><Binoculars /></Slot><Slot $w={24} $g={4}>查找</Slot><Drop g={5} /></SideRow>
          <SideRow $h={26}><Slot $w={16} $g={8}><Replace /></Slot><Slot $w={24} $g={3}>替换</Slot></SideRow>
          <SideRow $h={18}><Slot $w={9} $g={11}><Pointer /></Slot><Slot $w={24} $g={7}>选择</Slot><Drop g={5} /></SideRow>
        </Side>
      </Body>
      <Caption>编辑</Caption>
    </Group>

    <Group $w={55}>
      <Body><LargeButton w={56} top={7} head={41} icon={<Tiles />} lines={['模板']} arrow /></Body>
      <Caption>模板中心</Caption>
    </Group>
    <Group $w={51}>
      <Body><LargeButton w={51} top={8} icon={<PdfIcon />} lines={['转成', 'PDF']} /></Body>
      <Caption>转换</Caption>
      <RedFrame />
    </Group>
    <Group $w={63}>
      <Body><LargeButton w={63} top={9} icon={<Recorder />} lines={['屏幕', '录制']} /></Body>
      <Caption>视频处理</Caption>
    </Group>
    <Group $w={67}>
      <Body><LargeButton w={66} top={9} icon={<Speech />} lines={['文字', '转语音']} /></Body>
      <Caption>文字转语音</Caption>
    </Group>
    <Group $w={55}>
      <Body><LargeButton w={55} top={5} icon={<NewDoc />} lines={['新建']} /></Body>
      <Caption>快速新建</Caption>
    </Group>
  </Ribbon>
);

const WorkArea = () => (
  <Workspace>
    <Canvas>
      <Page>
        <Corners><Corner $side="right" /><Corner $side="left" /></Corners>
        <Line><Caret /><ReturnMark /></Line>
      </Page>
    </Canvas>
    <ScrollColumn>
      <ScrollTop>
        <Row><SplitIcon /></Row>
        <Rule /><Row><svg width="9" height="18"><path d="M0 12h9L4.500 7z" fill="#45464a" /></svg></Row>
      </ScrollTop>
      <Thumb><Lines w={8} c="#74767e" rows={[[0, 8], [0, 8], [0, 8], [0, 8]]} /></Thumb>
      <Spacer />
      <ScrollBottom $gap={5}>
        <Arrow c="#45464a" w={9} /><Rule />
        <StepStack>
          <DoubleArrow />
          <svg width="8" height="8"><circle cx="4" cy="4" r="3" fill="none" stroke="#45464a" /></svg>
          <DoubleArrow down />
        </StepStack>
      </ScrollBottom>
    </ScrollColumn>
    <Watermark><BaiduMark /></Watermark>
  </Workspace>
);

export default function App() {
  return (
    <Window>
      <Global />
      <HeaderArea />
      <RibbonArea />
      <WorkArea />
      <StatusBar>
        <StatusText $g={8} $w={51} $k={0.15}>页面: 1/1</StatusText><Sep $g={8} $c="#a3a4a9" />
        <StatusText $g={9} $w={40} $k={0.15}>字数: 0</StatusText><Sep $g={7} $c="#a3a4a9" />
        <Slot $w={16} $g={8}><StatusBook /></Slot>
        <StatusText $g={17} $w={56}>中文(中国)</StatusText><Sep $g={9} $c="#a3a4a9" />
        <StatusText $g={9} $w={25}>插入</StatusText><Sep $g={8} $c="#a3a4a9" />
        <Spacer />
        <Sep $g={0} $c="#8ea3a3" />
        <ViewOn><svg width="12" height="12" viewBox="0 0 12 12"><path d="M.5.5h11v11H.5zM2 3.500h8M2 5.500h8M2 7.500h8M2 9.500h8" fill="#fff" stroke="#666" /></svg></ViewOn>
        <Slot $w={12} $g={4}><BookView /></Slot><Slot $w={13} $g={5}><WebView /></Slot>
        <Slot $w={10} $g={7}><Lines w={10} c="#777" rows={[[0, 7], [3, 7], [3, 7], [0, 7], [3, 7]]} /></Slot>
        <Slot $w={11} $g={8}><Lines w={11} c="#666" rows={[[0, 11], [0, 11], [0, 11], [0, 11], [0, 11]]} /></Slot>
        <StatusText $g={13} $w={32} $k={0.2}>100%</StatusText>
        <Slot $w={16} $g={8}><ZoomRound /></Slot><Slider /><Slot $w={16}><ZoomRound plus /></Slot><Slot $w={4} />
      </StatusBar>
      <TaskBar>
        <Orb $w={26} $g={15} $c="radial-gradient(#6e8fb8,#b9cbe0)" />
        <Orb $w={15} $g={34} $t={4} $r="2px" $c="#d9bd8d" />
        <Orb $w={18} $g={52} $t={3} $c="#1b87e0" />
        <Orb $w={20} $g={48} $t={3} $c="linear-gradient(90deg,#43b8e8,#f0c534)" />
        <TaskButton $g={18}><Orb $w={20} $c="#b7cce2" /></TaskButton>
        <TaskButton $g={4}><Orb $w={20} $c="#e47b28" /></TaskButton>
        <TaskButton $g={4} $on><Orb $w={26} $r="2px" $c="linear-gradient(#4f9bc4 2px,#dcecf5 2px)" /></TaskButton>
        <Clock>17:12</Clock><PeekButton />
      </TaskBar>
    </Window>
  );
}
